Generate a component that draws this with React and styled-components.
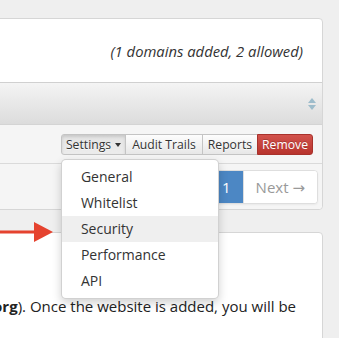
import React from "react";
import styled, { createGlobalStyle } from "styled-components";

const Global = createGlobalStyle`
  html, body { margin: 0; padding: 0; }
  body {
    background: #efefef;
    font-family: "Open Sans", "DejaVu Sans", sans-serif;
    color: #333;
    overflow: hidden;
    width: 339px;
    height: 338px;
  }
`;

const Page = styled.div`
  position: relative;
  margin-left: -300px;
  width: 623px;
  padding-top: 18px;
`;

const Panel = styled.div`
  background: #fff;
  border: 1px solid #d6d6d6;
  border-radius: 4px;
`;

const InfoRow = styled.div`
  height: 63px;
  display: flex;
  align-items: center;
  justify-content: flex-end;
  padding-right: 19px;
  font-size: 14.8px;
  font-style: italic;
  color: #333;
`;

const HeaderBar = styled.div`
  height: 41px;
  border-top: 1px solid #d0d0d0;
  background: linear-gradient(#f4f4f4, #dcdcdc);
  display: flex;
  align-items: center;
  justify-content: flex-end;
  padding-right: 6px;
`;

const Toolbar = styled.div`
  background: #f5f5f5;
  border-top: 1px solid #d4d4d4;
  border-bottom: 1px solid #dadada;
  box-sizing: border-box;
  height: 40px;
  padding-top: 9px;
  padding-right: 9px;
  display: flex;
  justify-content: flex-end;
`;

const BtnGroup = styled.div`
  position: relative;
  display: flex;
  height: 21px;
`;

const Btn = styled.button`
  font-family: "Open Sans", "DejaVu Sans", sans-serif;
  font-size: 12.2px;
  line-height: 19px;
  height: 21px;
  padding: 0 ${(p) => p.$pad || 5}px;
  margin: 0 0 0 -1px;
  display: flex;
  align-items: center;
  gap: 4px;
  color: ${(p) => (p.$danger ? "#fff" : "#333")};
  background: ${(p) =>
    p.$danger
      ? "linear-gradient(#d2524c, #b8342d)"
      : p.$active
      ? "linear-gradient(#e4e4e4, #ececec)"
      : "linear-gradient(#fdfdfd, #e7e7e7)"};
  border: 1px solid ${(p) => (p.$danger ? "#a8322c" : "#c4c4c4")};
  text-shadow: ${(p) => (p.$danger ? "0 -1px 0 rgba(0,0,0,0.2)" : "0 1px 0 rgba(255,255,255,0.7)")};
  box-shadow: ${(p) => (p.$active ? "inset 0 2px 3px rgba(0,0,0,0.12)" : "none")};
  border-radius: 0;
  white-space: nowrap;
  &:first-child { border-radius: 3px 0 0 3px; margin-left: 0; }
  &:nth-child(4) { border-radius: 0 3px 3px 0; }
`;

const Caret = styled.span`
  width: 0;
  height: 0;
  border-left: 3.5px solid transparent;
  border-right: 3.5px solid transparent;
  border-top: 4px solid #333;
  margin-top: 1px;
`;

const Menu = styled.ul`
  position: absolute;
  top: 25px;
  left: 0;
  z-index: 20;
  width: 158px;
  box-sizing: border-box;
  margin: 0;
  padding: 4px 0;
  list-style: none;
  background: #fff;
  border: 1px solid rgba(0, 0, 0, 0.18);
  border-radius: 5px;
  box-shadow: 0 4px 10px rgba(0, 0, 0, 0.18);
`;

const MenuItem = styled.li`
  font-size: 14px;
  line-height: 26px;
  height: 26px;
  padding-left: 19px;
  color: #333;
  background: ${(p) => (p.$hover ? "#efefef" : "transparent")};
`;

const PagerRow = styled.div`
  background: #f5f5f5;
  height: 45px;
  border-radius: 0 0 4px 4px;
  display: flex;
  align-items: center;
  justify-content: flex-end;
  padding-right: 4px;
`;

const Pager = styled.ul`
  display: flex;
  margin: 0;
  padding: 0;
  list-style: none;
  border: 1px solid #dedede;
  border-radius: 4px;
  background: #fff;
  box-shadow: 0 1px 2px rgba(0, 0, 0, 0.05);
  overflow: hidden;
`;

const PageItem = styled.li`
  font-size: 15px;
  line-height: 32px;
  padding: 0 12px;
  color: ${(p) => (p.$active ? "#fff" : "#999")};
  background: ${(p) => (p.$active ? "#4c87c4" : "#fff")};
  border-left: ${(p) => (p.$first ? "none" : "1px solid #dedede")};
  border-left-color: ${(p) => (p.$active ? "#4c87c4" : "#dedede")};
`;

const ContentPanel = styled(Panel)`
  margin-top: 22px;
  height: 200px;
  padding: 63px 26px 0 0;
  box-sizing: border-box;
`;

const Para = styled.p`
  margin: 0;
  font-size: 15px;
  line-height: 20px;
  color: #222;
  text-align: right;
  white-space: nowrap;
  b { font-weight: 700; }
`;

const Annotation = styled.svg`
  position: absolute;
  left: 300px;
  top: 221px;
  z-index: 10;
`;

const SortIcon = () => (
  <svg width="8" height="14" viewBox="0 0 8 14">
    <polygon points="0,6 4,1 8,6" fill="#9dbccb" />
    <polygon points="0,8 4,13 8,8" fill="#9dbccb" />
  </svg>
);

export default function App() {
  return (
    <>
      <Global />
      <Page>
        <Panel>
          <InfoRow>(1 domains added, 2 allowed)</InfoRow>
          <HeaderBar>
            <SortIcon />
          </HeaderBar>
          <Toolbar>
            <BtnGroup>
              <Btn $active $pad={4}>
                Settings <Caret />
              </Btn>
              <Btn $pad={6}>Audit Trails</Btn>
              <Btn $pad={5}>Reports</Btn>
              <Btn $danger $pad={4}>Remove</Btn>
              <Menu>
                <MenuItem>General</MenuItem>
                <MenuItem>Whitelist</MenuItem>
                <MenuItem $hover>Security</MenuItem>
                <MenuItem>Performance</MenuItem>
                <MenuItem>API</MenuItem>
              </Menu>
            </BtnGroup>
          </Toolbar>
          <PagerRow>
            <Pager>
              <PageItem $first>← Prev</PageItem>
              <PageItem $active>1</PageItem>
              <PageItem>Next →</PageItem>
            </Pager>
          </PagerRow>
        </Panel>
        <ContentPanel>
          <Para>
            Enter your domain (e.g. <b>example.org</b>). Once the website is added, you will be
          </Para>
        </ContentPanel>
        <Annotation width="56" height="22" viewBox="0 0 56 22">
          <line x1="0" y1="11" x2="36" y2="11" stroke="#e5432f" strokeWidth="3" />
          <polygon points="34,1 53,11 34,21" fill="#e5432f" />
        </Annotation>
      </Page>
    </>
  );
}
